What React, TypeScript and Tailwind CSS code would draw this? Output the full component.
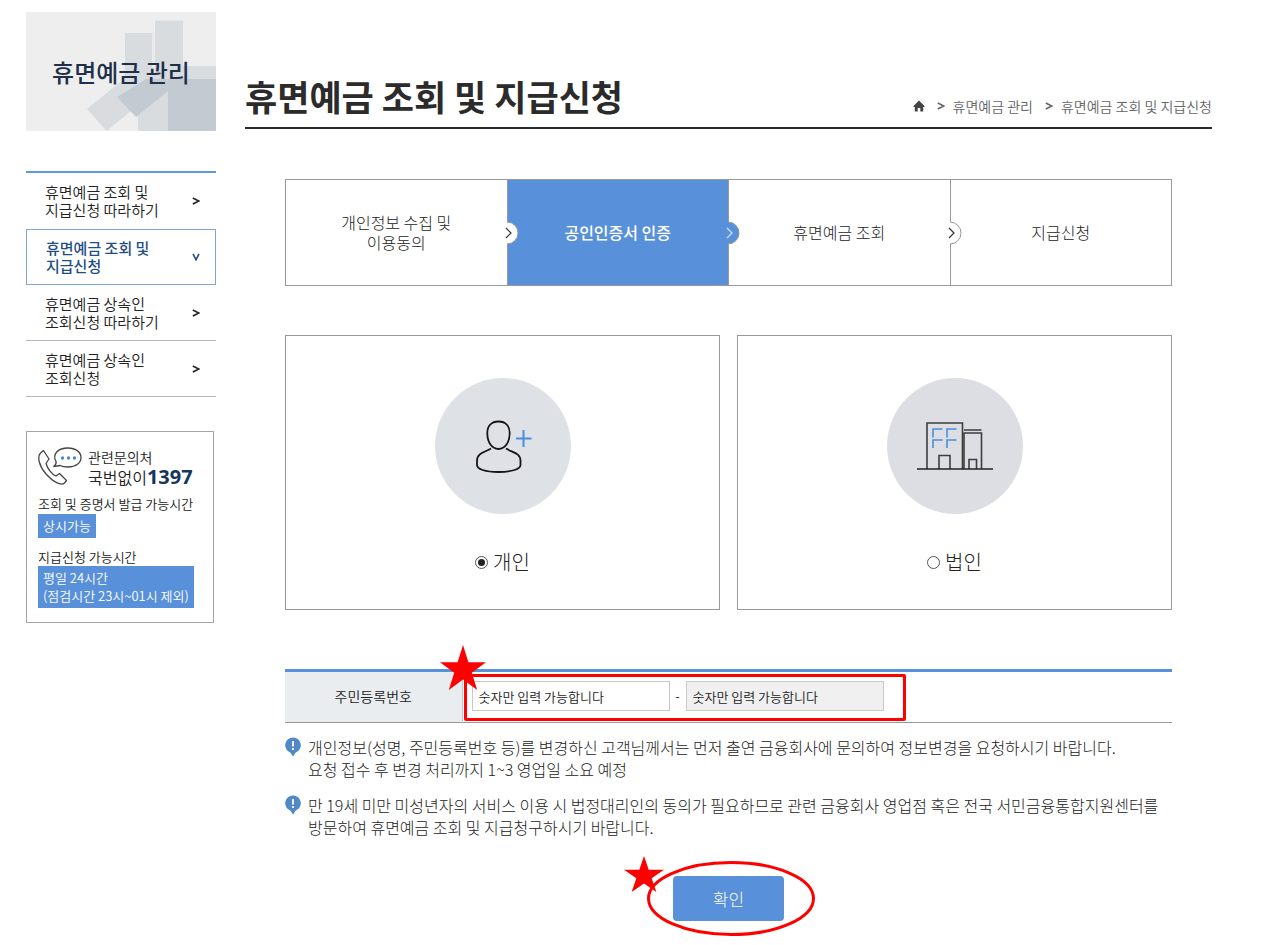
import { useState } from "react";

const MENU = [
  { lines: ["휴면예금 조회 및", "지급신청 따라하기"], active: false },
  { lines: ["휴면예금 조회 및", "지급신청"], active: true },
  { lines: ["휴면예금 상속인", "조회신청 따라하기"], active: false },
  { lines: ["휴면예금 상속인", "조회신청"], active: false },
];

const STEPS = [
  { lines: ["개인정보 수집 및", "이용동의"], active: false },
  { lines: ["공인인증서 인증"], active: true },
  { lines: ["휴면예금 조회"], active: false },
  { lines: ["지급신청"], active: false },
];

const NOTES = [
  [
    "개인정보(성명, 주민등록번호 등)를 변경하신 고객님께서는 먼저 출연 금융회사에 문의하여 정보변경을 요청하시기 바랍니다.",
    "요청 접수 후 변경 처리까지 1~3 영업일 소요 예정",
  ],
  [
    "만 19세 미만 미성년자의 서비스 이용 시 법정대리인의 동의가 필요하므로 관련 금융회사 영업점 혹은 전국 서민금융통합지원센터를",
    "방문하여 휴면예금 조회 및 지급청구하시기 바랍니다.",
  ],
];

function Star({ className }: { className: string }) {
  return (
    <svg viewBox="0 0 46 45" preserveAspectRatio="none" className={className} aria-hidden="true">
      <path
        d="M23 0 L28.4 17.2 H46 L31.8 27.8 L37.2 45 L23 34.4 L8.8 45 L14.2 27.8 L0 17.2 H17.6 Z"
        fill="#ff0000"
      />
    </svg>
  );
}

function Chevron({ down = false }: { down?: boolean }) {
  return (
    <svg
      viewBox="0 0 8 8"
      className="h-2 w-2 shrink-0"
      fill="none"
      stroke="currentColor"
      strokeWidth="1.6"
      aria-hidden="true"
    >
      <path d={down ? "M1 0.8 L4 6.8 L7 0.8" : "M0.8 1 L6.8 4 L0.8 7"} />
    </svg>
  );
}

function Banner() {
  return (
    <div className="relative flex h-[119px] items-center justify-center overflow-hidden bg-[#eeeeee]">
      <svg viewBox="0 0 190 119" preserveAspectRatio="none" className="absolute inset-0 h-full w-full" aria-hidden="true">
        <g fill="#d8dcdf">
          <path d="M129 8.5H157V54H190V119H112V93L80.5 119L61 97L99 66V21H126V62H129Z" />
        </g>
        <path d="M127.500 21V62" stroke="#e6e8e9" strokeWidth="2" />
        <path d="M190 67H120L91 85L110 105L142 79V119H190Z" fill="#c3cad2" />
      </svg>
      <h2 className="relative text-2xl font-medium text-[#20304a]">휴면예금 관리</h2>
    </div>
  );
}

function Contact() {
  return (
    <section className="mt-[34px] mr-0.5 border border-[#a6a6a6] px-[11px] pt-[15px] pb-3.5 text-[13px] font-[350] text-[#222]">
      <div className="flex items-start">
        <svg viewBox="0 0 44 38" className="h-[38px] w-11 shrink-0" fill="none" stroke="#444" strokeWidth="1.3" aria-hidden="true">
          <path d="M5.5 3.5 L2.5 6 C-1 10 1 19 8 27 C15 35 23 39 26.5 36 L28.5 33.5 L21.5 26.5 L18 29 C14 27.5 9.5 21.5 8 16.5 L11 12 Z" strokeLinejoin="round" />
          <path d="M18 14.5 C14 7 20 1 30 1 C38 1 43 5.5 43 10.5 C43 16 38 20 30 20 C27 20 24 19.5 22 18.5 L15.5 19.5 C17.5 18 18.5 16 18 14.5 Z" />
          <g fill="#4a87cf" stroke="none">
            <circle cx="24.5" cy="11" r="1.7" />
            <circle cx="30.5" cy="11" r="1.7" />
            <circle cx="36.5" cy="11" r="1.7" />
          </g>
        </svg>
        <div className="ml-1.5 whitespace-nowrap">
          <p className="text-sm leading-5">관련문의처</p>
          <p className="flex items-center text-base leading-5">
            국번없이
            <strong className="font-['Noto_Sans',sans-serif] text-xl leading-5 font-bold text-[#16365c]">1397</strong>
          </p>
        </div>
      </div>
      <p className="mt-2 leading-[18px] whitespace-nowrap">조회 및 증명서 발급 가능시간</p>
      <p className="mt-px w-fit bg-[#5890da] px-[5px] py-[3px] leading-[18px] text-white">상시가능</p>
      <p className="mt-2.5 leading-[18px]">지급신청 가능시간</p>
      <p className="w-fit bg-[#5890da] px-[5px] py-[3px] leading-[18px] whitespace-nowrap text-white">
        평일 24시간
        <br />
        (점검시간 23시~01시 제외)
      </p>
    </section>
  );
}

function PersonIcon() {
  return (
    <svg viewBox="0 0 136 136" className="h-[136px] w-[136px]" fill="none" aria-hidden="true">
      <circle cx="68" cy="68" r="68" fill="#dee1e6" />
      <g stroke="#151515" strokeWidth="1.8">
        <path d="M63.5 43.5C70.5 43.5 74.7 48 74.7 55C74.7 64.5 70 71 63.5 71C57 71 52.3 64.5 52.3 55C52.3 48 56.5 43.5 63.5 43.5Z" />
        <path d="M56 70.5C50 74.500 42 74.500 42 83V87C42 91 50 94 63.5 94C77 94 85.5 91 85.5 87V83C85.5 74.500 77 74.500 71 70.5" />
      </g>
      <path d="M88.5 52V69M81 60.5H96.5" stroke="#4a8fdd" strokeWidth="2" />
    </svg>
  );
}

function BuildingIcon() {
  return (
    <svg viewBox="0 0 136 136" className="h-[136px] w-[136px]" fill="none" aria-hidden="true">
      <circle cx="68" cy="68" r="68" fill="#dddee3" />
      <g stroke="#3d3d3d" strokeWidth="1.6">
        <path d="M40 91V45H75.5V91" />
        <path d="M77 52H94.5M77 91V55H94.5V91" />
        <path d="M52 91V77.5H63V91M82 91V81.5H89.5V91" />
        <path d="M30 91H106" stroke="#222" />
      </g>
      <path
        d="M46 59.500V51H55.500M60 59.500V51H69.500M46 70V62H55.500M60 70V62H69.500"
        stroke="#4a8fdd"
        strokeWidth="1.6"
      />
    </svg>
  );
}

export default function App() {
  const [kind, setKind] = useState("personal");

  const kinds = [
    { id: "personal", label: "개인", icon: <PersonIcon /> },
    { id: "corporate", label: "법인", icon: <BuildingIcon /> },
  ];

  return (
    <div className="flex items-start gap-[29px] bg-white pt-3 pr-[68px] pb-6 pl-[26px] font-['Noto_Sans_CJK_KR',sans-serif] text-[#222]">
      <aside className="w-[190px] shrink-0">
        <Banner />
        <nav className="mt-10 border-t-2 border-[#5b9bd5] text-[15px] leading-[18px]">
          {MENU.map((item) => (
            <a
              key={item.lines.join(" ")}
              href="#"
              className={
                item.active
                  ? "flex h-14 items-center justify-between border border-[#7ba7dc] pr-[15px] pl-[19px] font-medium text-[#1f4e82]"
                  : "flex h-14 items-center justify-between border-b border-[#b9b9b9] pr-4 pl-[19px] font-[350] first:border-b-0"
              }
            >
              <span>
                {item.lines[0]}
                <br />
                {item.lines[1]}
              </span>
              <Chevron down={item.active} />
            </a>
          ))}
        </nav>
        <Contact />
      </aside>

      <main className="min-w-0 flex-1">
        <header className="flex items-end justify-between border-b-2 border-[#2b2b2b] pt-[57px]">
          <h1 className="pb-[5px] text-[35px] leading-[53px] font-bold text-[#2b2b2b]">휴면예금 조회 및 지급신청</h1>
          <nav aria-label="위치" className="flex items-center gap-2 pb-[11px] text-sm leading-5 font-[350] text-[#666]">
            <a href="#" aria-label="홈" className="mr-1">
              <svg viewBox="0 0 12 12" className="h-3 w-3" fill="#444" aria-hidden="true">
                <path d="M6 0.5L0.5 6V7H1.8V11.5H4.7V8H7.3V11.5H10.2V7H11.5V6Z" />
              </svg>
            </a>
            <Chevron />
            <a href="#" className="mr-1">휴면예금 관리</a>
            <Chevron />
            <a href="#">휴면예금 조회 및 지급신청</a>
          </nav>
        </header>

        <div className="px-10">
          <ol className="mt-[50px] flex h-[107px] border border-[#999] text-base leading-5">
            {STEPS.map((step, i) => (
              <li
                key={step.lines[0]}
                className={
                  step.active
                    ? "relative flex flex-1 items-center justify-center border-r border-[#999] bg-[#5890da] pb-0.5 text-center font-medium text-white"
                    : "relative flex flex-1 items-center justify-center border-r border-[#999] pb-0.5 text-center font-light last:border-r-0"
                }
              >
                <span>
                  {step.lines.map((line) => (
                    <span key={line} className="block">{line}</span>
                  ))}
                </span>
                {i < STEPS.length - 1 && (
                  <svg
                    viewBox="0 0 20 24"
                    className="absolute top-1/2 -right-3 z-10 h-6 w-5 -translate-y-1/2"
                    fill="none"
                    aria-hidden="true"
                  >
                    <path d="M8 1A11 11 0 0 1 8 23" fill={step.active ? "#5890da" : "#fff"} stroke="#999" />
                    <path d="M6 1V23" stroke={step.active ? "#5890da" : "#fff"} strokeWidth="4" />
                    <path d="M7 7L12 12L7 17" stroke={step.active ? "#d4e4fa" : "#333"} strokeWidth="1.2" />
                  </svg>
                )}
              </li>
            ))}
          </ol>

          <div className="mt-[49px] grid grid-cols-2 gap-[17px]">
            {kinds.map((k) => (
              <label
                key={k.id}
                className="flex h-[275px] cursor-pointer flex-col items-center border border-[#999] pt-[42px]"
              >
                {k.icon}
                <span className="mt-[33px] flex items-center gap-[5px] text-xl leading-[30px] font-light">
                  <input
                    type="radio"
                    name="kind"
                    checked={kind === k.id}
                    onChange={() => setKind(k.id)}
                    className="h-[13px] w-[13px] appearance-none rounded-full border border-[#555] bg-white p-0.5 before:block before:h-full before:w-full before:rounded-full checked:before:bg-[#222]"
                  />
                  {k.label}
                </span>
              </label>
            ))}
          </div>

          <div className="relative mt-[59px]">
            <table className="w-full border-t-3 border-b border-t-[#5890da] border-b-[#999]">
              <tbody>
                <tr>
                  <th
                    scope="row"
                    className="h-[52px] w-[177px] border-r border-[#c8c8c8] bg-[#e9edf0] pb-0.5 text-center text-sm font-[350]"
                  >
                    <label htmlFor="rrn-front">주민등록번호</label>
                  </th>
                  <td className="pt-0 pb-0.5 pl-[9px]">
                    <div className="flex items-center text-[13px] font-[350]">
                      <input
                        id="rrn-front"
                        type="text"
                        inputMode="numeric"
                        placeholder="숫자만 입력 가능합니다"
                        className="h-[30px] w-[198px] border border-[#c8c8c8] px-1.5 placeholder:text-[#222]"
                      />
                      <span className="w-4 text-center">-</span>
                      <input
                        type="password"
                        inputMode="numeric"
                        aria-label="주민등록번호 뒷자리"
                        placeholder="숫자만 입력 가능합니다"
                        className="h-[30px] w-[198px] border border-[#c8c8c8] bg-[#f0f0f0] px-1.5 placeholder:text-[#222]"
                      />
                    </div>
                  </td>
                </tr>
              </tbody>
            </table>
            <div className="pointer-events-none absolute top-[5px] left-[179px] h-[47px] w-[442px] rounded-xs border-3 border-[#ff0000]" />
            <Star className="pointer-events-none absolute -top-6 left-[155px] h-[45px] w-[46px]" />
          </div>

          <ul className="mt-[13px] flex flex-col gap-3.5 text-base leading-[22px] font-light whitespace-nowrap">
            {NOTES.map((note) => (
              <li key={note[1]} className="flex gap-[7px]">
                <svg viewBox="0 0 16 20" className="mt-px h-5 w-4 shrink-0" aria-hidden="true">
                  <path d="M8 0.5A7.8 7.8 0 0 1 10.5 15.7L8 19.5L5.5 15.7A7.8 7.8 0 0 1 8 0.5Z" fill="#5088c8" />
                  <path d="M8 4V9.5M8 11V13" stroke="#fff" strokeWidth="1.8" />
                </svg>
                <p>
                  {note[0]}
                  <br />
                  {note[1]}
                </p>
              </li>
            ))}
          </ul>

          <div className="mt-[38px] flex justify-center">
            <div className="relative">
              <button
                type="button"
                className="block h-[45px] w-[111px] rounded-sm bg-[#5890da] text-[17px] font-light text-white"
              >
                확인
              </button>
              <svg
                viewBox="0 0 168 75"
                className="pointer-events-none absolute -top-[15px] -left-[26px] h-[75px] w-[168px] max-w-none"
                aria-hidden="true"
              >
                <ellipse cx="84" cy="37.5" rx="82.5" ry="36" fill="none" stroke="#ff0000" strokeWidth="3" />
              </svg>
              <Star className="pointer-events-none absolute -top-5 -left-[49px] h-9 w-10" />
            </div>
          </div>
        </div>
      </main>
    </div>
  );
}
